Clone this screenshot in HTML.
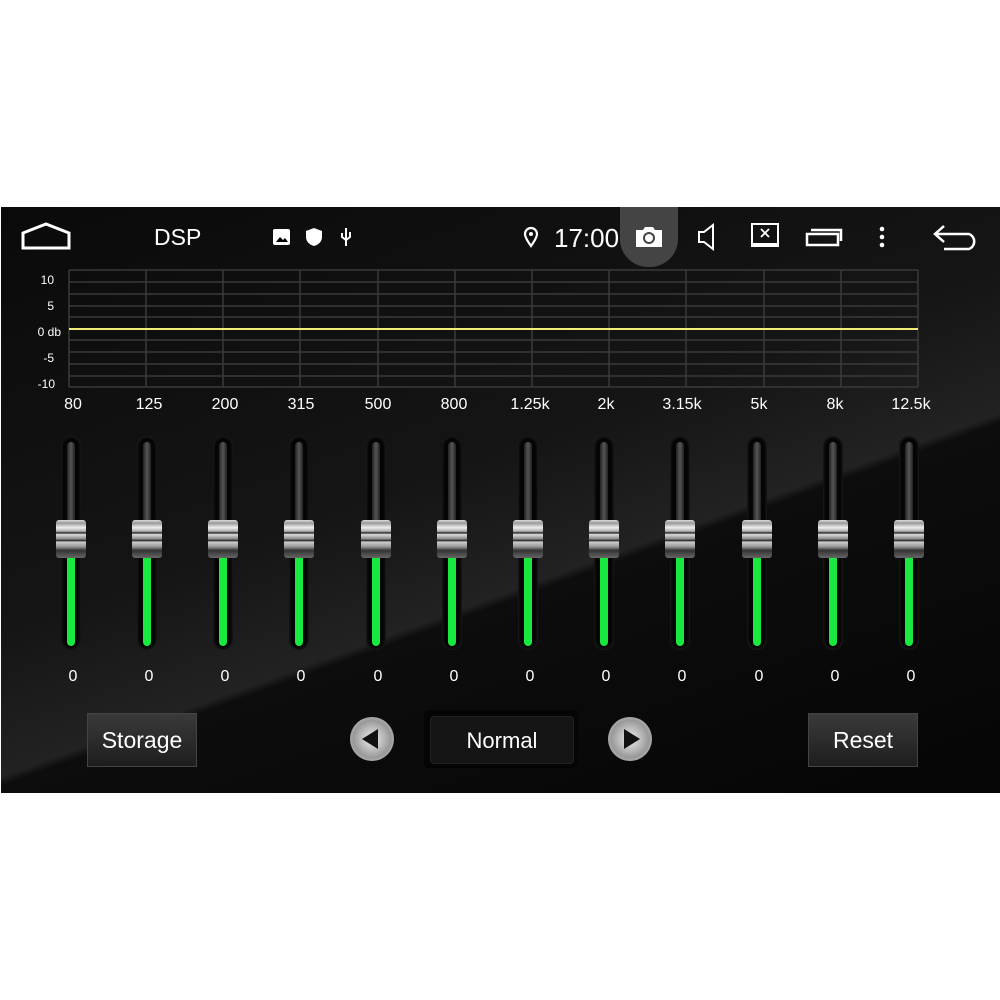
<!DOCTYPE html><html><head><style>
body{margin:0;width:1000px;height:1000px;background:#fff;position:relative;font-family:"Liberation Sans",sans-serif;overflow:hidden}
#scr{position:absolute;left:1px;top:207px;width:999px;height:586px;background:linear-gradient(160deg,#0a0a0a 0%,#151515 45%,#222 60%,#0d0d0d 61%,#050505 100%);overflow:hidden}
.a{position:absolute;color:#fff}
.tick{position:absolute;color:#fff;font-size:12px;text-align:right;width:50px}
.fl{position:absolute;top:396px;color:#fff;font-size:16px;width:60px;text-align:center}
.zl{position:absolute;top:668px;color:#fff;font-size:16px;width:30px;text-align:center}
.tr{position:absolute;top:436px;width:20px;height:214px;border-radius:10px;background:#050505;box-shadow:inset 0 0 3px #333}
.tr i{position:absolute;left:6px;top:6px;width:8px;height:110px;border-radius:4px;background:linear-gradient(90deg,#222,#555,#222)}
.tr b{position:absolute;left:6px;top:118px;width:8px;height:92px;border-radius:4px;background:#19e83f}
.kn{position:absolute;top:520px;width:30px;height:38px;border-radius:3px;background:linear-gradient(#ddd 0,#999 8%,#eee 20%,#aaa 30%,#222 34%,#ddd 38%,#888 50%,#222 54%,#ccc 58%,#999 70%,#333 80%,#666 100%)}
.btn{position:absolute;background:linear-gradient(#3a3a3a,#1e1e1e);border:1px solid #444;color:#fff;font-size:23px;text-align:center}
.rb{position:absolute;width:44px;height:44px;border-radius:50%;background:radial-gradient(circle,#eee,#999 60%,#ddd);top:717px}
</style></head><body>
<div id="scr"></div>
<!-- status bar -->
<svg class="a" style="left:20px;top:221px" width="52" height="30"><path d="M3 27V12L26 3 49 12V27Z" fill="none" stroke="#fff" stroke-width="3"/></svg>
<div class="a" style="left:154px;top:224px;font-size:23px">DSP</div>
<svg class="a" style="left:272px;top:227px" width="90" height="20"><rect x="1" y="2" width="17" height="16" rx="2" fill="#fff"/><path d="M4 15l4-5 3 3 2-2 3 4z" fill="#000"/><path d="M42 1l8 3v6c0 5-4 8-8 9-4-1-8-4-8-9V4z" fill="#fff"/><path d="M74 1v18M70 6v4l4 3 4-3V5" stroke="#fff" stroke-width="2" fill="none"/></svg>
<svg class="a" style="left:522px;top:226px" width="18" height="22"><path d="M9 20C4 13 3 10 3 8a6 6 0 0 1 12 0c0 2-1 5-6 12z" fill="none" stroke="#fff" stroke-width="2.2"/><circle cx="9" cy="8" r="2" fill="#fff"/></svg>
<div class="a" style="left:554px;top:223px;font-size:26px">17:00</div>
<div style="position:absolute;left:620px;top:207px;width:58px;height:60px;background:#444;border-radius:0 0 28px 28px"></div>
<svg class="a" style="left:634px;top:225px" width="30" height="24"><path d="M2 5h7l2-3h8l2 3h7v17H2z" fill="#fff"/><circle cx="15" cy="13" r="6" fill="#444"/><circle cx="15" cy="13" r="4" fill="#fff"/></svg>
<svg class="a" style="left:696px;top:223px" width="22" height="28"><path d="M3 9h5l9-7v24l-9-7H3z" fill="none" stroke="#fff" stroke-width="2"/></svg>
<svg class="a" style="left:751px;top:223px" width="30" height="26"><rect x="1" y="1" width="26" height="21" fill="none" stroke="#fff" stroke-width="2"/><rect x="0" y="20" width="28" height="4" fill="#fff"/><path d="M10 6l8 8M18 6l-8 8" stroke="#fff" stroke-width="1.8"/></svg>
<svg class="a" style="left:805px;top:226px" width="38" height="22"><rect x="2" y="8" width="31" height="11" fill="none" stroke="#fff" stroke-width="2.5"/><path d="M6 4h30v11" fill="none" stroke="#fff" stroke-width="2.5"/></svg>
<svg class="a" style="left:876px;top:226px" width="12" height="22"><circle cx="6" cy="3" r="2.3" fill="#fff"/><circle cx="6" cy="11" r="2.3" fill="#fff"/><circle cx="6" cy="19" r="2.3" fill="#fff"/></svg>
<svg class="a" style="left:932px;top:223px" width="48" height="28"><path d="M12 3L3 11l9 8M3 11h34a8 8 0 0 1 0 15H12" fill="none" stroke="#fff" stroke-width="2.5"/></svg>
<!-- graph -->
<svg class="a" style="left:0;top:0" width="1000" height="400">
<g stroke="#3a3a3a" stroke-width="1.5">
<path d="M69 270H918M69 282H918M69 294H918M69 306H918M69 317H918M69 340H918M69 352H918M69 364H918M69 376H918M69 387H918"/>
<path d="M69 270V387M146 270V387M223 270V387M300 270V387M378 270V387M455 270V387M532 270V387M609 270V387M686 270V387M764 270V387M841 270V387M918 270V387"/>
</g><path d="M69 329H918" stroke="#f2ec7a" stroke-width="2"/></svg>
<div class="tick" style="left:4px;top:273px">10</div>
<div class="tick" style="left:4px;top:299px">5</div>
<div class="tick" style="left:11px;top:325px;text-align:right">0 db</div>
<div class="tick" style="left:4px;top:351px">-5</div>
<div class="tick" style="left:5px;top:377px">-10</div>
<div class="fl" style="left:43px">80</div><div class="fl" style="left:119px">125</div><div class="fl" style="left:195px">200</div><div class="fl" style="left:271px">315</div><div class="fl" style="left:348px">500</div><div class="fl" style="left:424px">800</div><div class="fl" style="left:500px">1.25k</div><div class="fl" style="left:576px">2k</div><div class="fl" style="left:652px">3.15k</div><div class="fl" style="left:729px">5k</div><div class="fl" style="left:805px">8k</div><div class="fl" style="left:881px">12.5k</div>
<div class="tr" style="left:61px"><i></i><b></b></div><div class="tr" style="left:137px"><i></i><b></b></div><div class="tr" style="left:213px"><i></i><b></b></div><div class="tr" style="left:289px"><i></i><b></b></div><div class="tr" style="left:366px"><i></i><b></b></div><div class="tr" style="left:442px"><i></i><b></b></div><div class="tr" style="left:518px"><i></i><b></b></div><div class="tr" style="left:594px"><i></i><b></b></div><div class="tr" style="left:670px"><i></i><b></b></div><div class="tr" style="left:747px"><i></i><b></b></div><div class="tr" style="left:823px"><i></i><b></b></div><div class="tr" style="left:899px"><i></i><b></b></div>
<div class="kn" style="left:56px"></div><div class="kn" style="left:132px"></div><div class="kn" style="left:208px"></div><div class="kn" style="left:284px"></div><div class="kn" style="left:361px"></div><div class="kn" style="left:437px"></div><div class="kn" style="left:513px"></div><div class="kn" style="left:589px"></div><div class="kn" style="left:665px"></div><div class="kn" style="left:742px"></div><div class="kn" style="left:818px"></div><div class="kn" style="left:894px"></div>
<div class="zl" style="left:58px">0</div><div class="zl" style="left:134px">0</div><div class="zl" style="left:210px">0</div><div class="zl" style="left:286px">0</div><div class="zl" style="left:363px">0</div><div class="zl" style="left:439px">0</div><div class="zl" style="left:515px">0</div><div class="zl" style="left:591px">0</div><div class="zl" style="left:667px">0</div><div class="zl" style="left:744px">0</div><div class="zl" style="left:820px">0</div><div class="zl" style="left:896px">0</div>
<div class="btn" style="left:87px;top:713px;width:108px;height:52px;line-height:52px">Storage</div>
<div class="btn" style="left:808px;top:713px;width:108px;height:52px;line-height:52px">Reset</div>
<div style="position:absolute;left:424px;top:710px;width:154px;height:58px;background:#050505;border-radius:6px"></div>
<div class="btn" style="left:430px;top:716px;width:142px;height:46px;line-height:48px;background:#151515;border-color:#222;font-size:22px;border-radius:4px">Normal</div>
<div class="rb" style="left:350px"><svg width="44" height="44"><path d="M12 22L28 12V32Z" fill="#111"/></svg></div>
<div class="rb" style="left:608px"><svg width="44" height="44"><path d="M32 22L16 12V32Z" fill="#111"/></svg></div>
</body></html>
